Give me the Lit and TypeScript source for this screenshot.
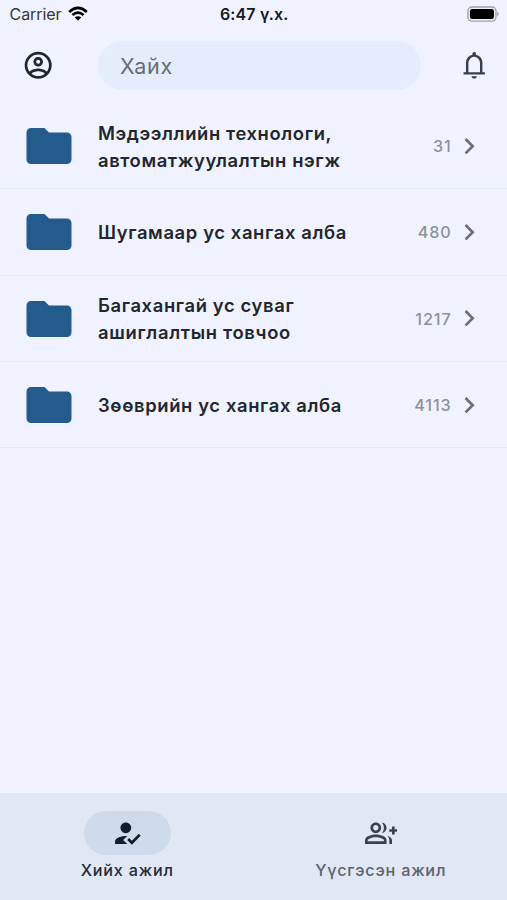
import { LitElement, html, css, svg } from "lit";
import { customElement } from "lit/decorators.js";

interface Unit {
  lines: string[];
  count: number;
  spacing: number[];
}

const units: Unit[] = [
  { lines: ["Мэдээллийн технологи,", "автоматжуулалтын нэгж"], count: 31, spacing: [0.62, 0.6] },
  { lines: ["Шугамаар ус хангах алба"], count: 480, spacing: [0.63] },
  { lines: ["Багахангай ус суваг", "ашиглалтын товчоо"], count: 1217, spacing: [0.64, 0.68] },
  { lines: ["Зөөврийн ус хангах алба"], count: 4113, spacing: [0.63] },
];

const paths = {
  account:
    "M12,2A10,10 0 0,0 2,12A10,10 0 0,0 12,22A10,10 0 0,0 22,12A10,10 0 0,0 12,2M7.07,18.28C7.5,17.38 10.12,16.5 12,16.5C13.88,16.5 16.5,17.38 16.93,18.28C15.57,19.36 13.86,20 12,20C10.14,20 8.43,19.36 7.07,18.28M18.36,16.83C16.93,15.09 13.46,14.5 12,14.5C10.54,14.5 7.07,15.09 5.64,16.83C4.62,15.5 4,13.82 4,12C4,7.59 7.59,4 12,4C16.41,4 20,7.59 20,12C20,13.82 19.38,15.5 18.36,16.83M12,6C10.06,6 8.5,7.56 8.5,9.5C8.5,11.44 10.06,13 12,13C13.94,13 15.5,11.44 15.5,9.5C15.5,7.56 13.94,6 12,6M12,11A1.5,1.5 0 0,1 10.5,9.5A1.5,1.5 0 0,1 12,8A1.5,1.5 0 0,1 13.5,9.5A1.5,1.5 0 0,1 12,11Z",
  bell: "M4.1 18.9v-1.6h1.8v-7.1q0-2.2 1.3-3.85T10.7 4.2v-.7q0-.55.38-.92T12 2.2t.92.38.38.92v.7q2.2.5 3.5 2.15t1.3 3.85v7.1h1.8v1.6zM12 21.9q-.8 0-1.35-.5T10 20.1h4q-.1.8-.65 1.3t-1.35.5M7.7 17.3h8.6v-7q0-1.85-1.25-3.15T12 5.8 8.95 7.15 7.7 10.3z",
  folder:
    "M10,4H4C2.89,4 2,4.89 2,6V18A2,2 0 0,0 4,20H20A2,2 0 0,0 22,18V8C22,6.89 21.1,6 20,6H12L10,4Z",
  chevron: "M8.59 16.59 13.17 12 8.59 7.41 10 6l6 6-6 6z",
  assigned:
    "M9 17l3-2.94c-.39-.04-.68-.06-1-.06-2.67 0-8 1.34-8 4v2h9l-3-3zm2-5c2.21 0 4-1.79 4-4s-1.79-4-4-4-4 1.79-4 4 1.79 4 4 4m4.47 8.5L12 17l1.4-1.41 2.07 2.08 5.13-5.17 1.4 1.41-6.53 6.59z",
  created:
    "M22 9V7h-2v2h-2v2h2v2h2v-2h2V9zM8 12c2.21 0 4-1.79 4-4s-1.79-4-4-4-4 1.79-4 4 1.79 4 4 4zm0-6c1.1 0 2 .9 2 2s-.9 2-2 2-2-.9-2-2 .9-2 2-2zm0 7c-2.67 0-8 1.34-8 4v3h16v-3c0-2.66-5.33-4-8-4zm6 5H2v-.99C2.2 16.29 5.3 15 8 15s5.8 1.29 6 2v1zM12.51 4.05C13.43 5.11 14 6.49 14 8s-.57 2.89-1.49 3.95C14.47 11.7 16 10.04 16 8s-1.53-3.7-3.49-3.95zM16.53 13.83C17.42 14.66 18 15.7 18 17v3h2v-3c0-1.45-1.59-2.51-3.47-3.17z",
};

const icon = (name: keyof typeof paths, cls: string) =>
  html`<svg class=${cls} viewBox="0 0 24 24" fill="currentColor">${svg`<path d=${paths[name]} />`}</svg>`;

@customElement("app-root")
export class AppRoot extends LitElement {
  static styles = css`
    :host {
      display: flex;
      flex-direction: column;
      height: 900px;
      width: 100%;
      background: #f0f3ff;
      color: #22262d;
      font-family: Inter, "Noto Sans", sans-serif;
      overflow: hidden;
    }
    svg {
      display: block;
      flex: none;
    }
    .status {
      display: grid;
      grid-template-columns: 1fr auto 1fr;
      align-items: center;
      height: 28px;
      padding: 0 8px 0 9.5px;
      color: #000;
    }
    .carrier {
      display: flex;
      align-items: center;
      gap: 6px;
      font-size: 16px;
      letter-spacing: -0.05px;
      color: #33363c;
    }
    .wifi {
      width: 20px;
      height: 15.5px;
      color: #000;
    }
    .clock {
      font-size: 16px;
      font-weight: 600;
      letter-spacing: 0.15px;
      color: #15171b;
    }
    .battery {
      justify-self: end;
      width: 32px;
      height: 16.5px;
    }
    .top {
      display: flex;
      align-items: center;
      height: 75px;
      padding: 0 16.5px 0 22.3px;
    }
    .mid {
      width: 32.4px;
      height: 32.4px;
    }
    .bell {
      color: #3a3d45;
    }
    .search {
      width: 323px;
      height: 49px;
      box-sizing: border-box;
      margin: 0 auto 0 43.3px;
      border-radius: 25px;
      background: #e3edfb;
      padding-left: 22px;
      display: flex;
      align-items: center;
      font-size: 21.5px;
      letter-spacing: 0.75px;
      color: #666c76;
    }
    .row {
      display: flex;
      align-items: center;
      box-sizing: border-box;
      height: 86.25px;
      padding: 1px 22px 0 22.4px;
      border-bottom: 1px solid #e5e9f4;
    }
    .folder {
      width: 54px;
      height: 54px;
      color: #235b8c;
    }
    .name {
      flex: 1;
      margin-left: 21.6px;
      padding-top: 1px;
      font-size: 18.4px;
      font-weight: 600;
      line-height: 27px;
      white-space: nowrap;
    }
    .count {
      font-size: 16.2px;
      font-weight: 500;
      letter-spacing: 0.9px;
      color: #8d9099;
    }
    .chevron {
      width: 32.4px;
      height: 32.4px;
      margin-left: 1px;
      color: #6b6e76;
    }
    .nav {
      display: grid;
      grid-template-columns: 1fr 1fr;
      height: 107px;
      margin-top: auto;
      background: #e0e8f5;
    }
    .tab {
      display: flex;
      flex-direction: column;
      align-items: center;
      padding: 18px 0 0 1px;
      font-size: 16.2px;
      font-weight: 500;
      letter-spacing: 0.8px;
      line-height: 22px;
      color: #5c636e;
      gap: 4px;
    }
    .pill {
      width: 87px;
      height: 44px;
      border-radius: 22px;
      display: flex;
      align-items: center;
      justify-content: center;
      color: #3b424c;
    }
    .active {
      color: #252b35;
    }
    .active .pill {
      background: #cfdbea;
      color: #141c2e;
    }
  `;

  render() {
    return html`
      <div class="status">
        <div class="carrier">
          <span>Carrier</span>
          <svg class="wifi" viewBox="0 0 21 16" fill="none" stroke="currentColor" stroke-width="2.7">
            <path d="M1.2 6.1Q10.5-2.3 19.8 6.1" />
            <path d="M4.6 9.4Q10.5 4.3 16.4 9.4" />
            <path d="M7.1 11.8Q10.5 9.2 13.9 11.8L10.5 15.3Z" fill="currentColor" stroke="none" />
          </svg>
        </div>
        <div class="clock">6:47 ү.х.</div>
        <svg class="battery" viewBox="0 0 33 17">
          <rect x="0.9" y="1" width="29" height="14.6" rx="4.2" fill="#f0f1f5" stroke="#9fa1a8" stroke-width="1.4" />
          <rect x="3" y="3.1" width="24.8" height="10.4" rx="2.2" fill="#000" />
          <path d="M31.2 6q1.6.7 1.6 2.3t-1.6 2.3z" fill="#9fa1a8" />
        </svg>
      </div>
      <div class="top">
        ${icon("account", "mid")}
        <div class="search">Хайх</div>
        ${icon("bell", "mid bell")}
      </div>
      <div class="list">
        ${units.map(
          (u) => html`<div class="row">
            ${icon("folder", "folder")}
            <div class="name">
              ${u.lines.map(
                (l, i) => html`<div><span style="letter-spacing:${u.spacing[i]}px">${l}</span></div>`
              )}
            </div>
            <span class="count">${u.count}</span>
            ${icon("chevron", "chevron")}
          </div>`
        )}
      </div>
      <div class="nav">
        <div class="tab active">
          <div class="pill">${icon("assigned", "mid")}</div>
          <span>Хийх ажил</span>
        </div>
        <div class="tab">
          <div class="pill">${icon("created", "mid")}</div>
          <span>Үүсгэсэн ажил</span>
        </div>
      </div>
    `;
  }
}
